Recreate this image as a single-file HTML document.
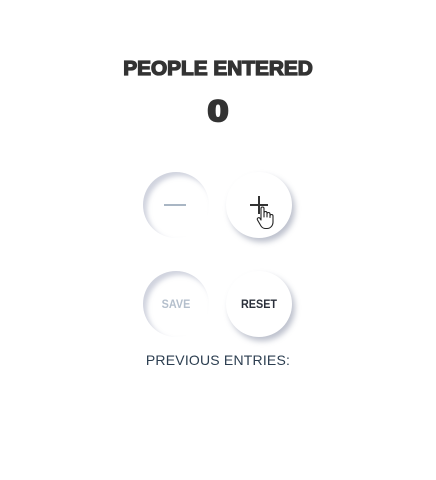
<!DOCTYPE html>
<html><head><meta charset="utf-8"><style>
html,body{margin:0;padding:0;background:#fff;width:436px;height:480px;overflow:hidden;}
.t{position:absolute;left:0;width:436px;text-align:center;font-family:"Liberation Sans",sans-serif;color:#333;}
.h{top:58px;font-size:20px;font-weight:900;-webkit-text-stroke:1.3px #333;transform:scaleX(1.04);}
.n{top:95px;font-size:30px;font-weight:900;-webkit-text-stroke:2.2px #333;transform:scaleX(1.25);}
.p{top:352px;font-size:14px;color:#2c3e50;letter-spacing:0.2px;}
.c{position:absolute;width:66px;height:66px;border-radius:50%;background:#fff;}
.in{box-shadow:inset 4px 4px 5px rgba(120,130,160,.35);}
.out{box-shadow:3px 4px 6px rgba(90,100,130,.4);}
.lbl{position:absolute;left:0;width:66px;top:26px;text-align:center;font-family:"Liberation Sans",sans-serif;font-weight:bold;font-size:12px;transform:scaleX(0.9);}
</style></head><body>
<div class="t h">PEOPLE ENTERED</div>
<div class="t n">0</div>
<div class="c in" style="left:143px;top:172px;"><div style="position:absolute;left:21px;top:32px;width:22px;height:2px;background:#a9b6c4;"></div></div>
<div class="c out" style="left:226px;top:172px;">
<div style="position:absolute;left:24px;top:32px;width:18px;height:2px;background:#333;"></div>
<div style="position:absolute;left:32px;top:24px;width:2px;height:18px;background:#333;"></div>
<svg style="position:absolute;left:30px;top:34px" width="20" height="24" viewBox="0 0 20 24"><path d="M5 2.5a1.5 1.5 0 0 1 3 0V11V7a1.5 1.5 0 0 1 3 0v4V8a1.5 1.5 0 0 1 3 0v3.5V10a1.5 1.5 0 0 1 3 0v6c0 3.5-2.5 6.5-6 6.5h-1.5c-2 0-3.5-1-4.5-2.5L1.5 14a1.5 1.5 0 0 1 2.5-1.7L5 14z" fill="#fff" stroke="#222" stroke-width="1.1" stroke-linejoin="round"/></svg>
</div>
<div class="c in" style="left:143px;top:271px;"><div class="lbl" style="color:#b4bfcc;">SAVE</div></div>
<div class="c out" style="left:226px;top:271px;"><div class="lbl" style="color:#2a2f3a;">RESET</div></div>
<div class="t p">PREVIOUS ENTRIES:</div>
</body></html>
